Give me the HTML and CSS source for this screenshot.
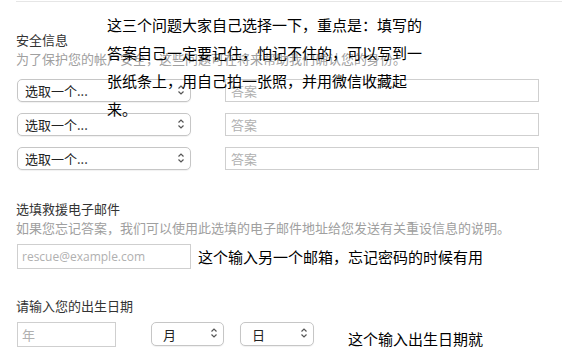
FILE: index.html
```html
<!DOCTYPE html>
<html lang="zh-CN">
<head>
    <meta charset="UTF-8">
    <meta name="viewport" content="width=device-width, initial-scale=1.0">
    <title>安全信息</title>
    <link rel="stylesheet" href="styles.css">
</head>
<body>
    <div class="page">
        <p class="note">这三个问题大家自己选择一下，重点是：填写的答案自己一定要记住，怕记不住的，可以写到一张纸条上，用自己拍一张照，并用微信收藏起来。</p>

        <div class="title">安全信息</div>
        <div class="hint">为了保护您的帐户安全，这些问题可在将来帮助我们确认您的身份。</div>
        <div class="questions">
            <div class="row">
                <span class="select-wrap wide">
                    <select><option>选取一个...</option></select>
                    <svg class="arrows" width="8" height="12" viewBox="0 0 8 12"><path d="M1.5 4.5 L4 2 L6.5 4.5 M1.5 7.5 L4 10 L6.5 7.5" fill="none" stroke="#555" stroke-width="1.2"/></svg>
                </span>
                <input class="answer" type="text" placeholder="答案">
            </div>
            <div class="row">
                <span class="select-wrap wide">
                    <select><option>选取一个...</option></select>
                    <svg class="arrows" width="8" height="12" viewBox="0 0 8 12"><path d="M1.5 4.5 L4 2 L6.5 4.5 M1.5 7.5 L4 10 L6.5 7.5" fill="none" stroke="#555" stroke-width="1.2"/></svg>
                </span>
                <input class="answer" type="text" placeholder="答案">
            </div>
            <div class="row">
                <span class="select-wrap wide">
                    <select><option>选取一个...</option></select>
                    <svg class="arrows" width="8" height="12" viewBox="0 0 8 12"><path d="M1.5 4.5 L4 2 L6.5 4.5 M1.5 7.5 L4 10 L6.5 7.5" fill="none" stroke="#555" stroke-width="1.2"/></svg>
                </span>
                <input class="answer" type="text" placeholder="答案">
            </div>
        </div>

        <div class="title section">选填救援电子邮件</div>
        <div class="hint">如果您忘记答案，我们可以使用此选填的电子邮件地址给您发送有关重设信息的说明。</div>
        <div class="email-row">
            <input class="email" type="email" placeholder="rescue@example.com">
            <span class="inline-note">这个输入另一个邮箱，忘记密码的时候有用</span>
        </div>

        <div class="title section-birth">请输入您的出生日期</div>
        <div class="birth-row">
            <input class="year" type="text" placeholder="年">
            <span class="select-wrap month">
                <select><option>月</option></select>
                <svg class="arrows" width="8" height="12" viewBox="0 0 8 12"><path d="M1.5 4.5 L4 2 L6.5 4.5 M1.5 7.5 L4 10 L6.5 7.5" fill="none" stroke="#555" stroke-width="1.2"/></svg>
            </span>
            <span class="select-wrap day">
                <select><option>日</option></select>
                <svg class="arrows" width="8" height="12" viewBox="0 0 8 12"><path d="M1.5 4.5 L4 2 L6.5 4.5 M1.5 7.5 L4 10 L6.5 7.5" fill="none" stroke="#555" stroke-width="1.2"/></svg>
            </span>
            <span class="inline-note birth-note">这个输入出生日期就</span>
        </div>
    </div>
</body>
</html>
```

FILE: styles.css
```css
body {
    margin: 0;
    background: #fff;
    font-family: "Noto Sans CJK SC", "Noto Sans", sans-serif;
    font-size: 13px;
    color: #333;
}
.page {
    position: relative;
    margin: 1px 0 0 16px;
    border-top: 1px solid #e6e6e6;
    padding-top: 29px;
}
.note {
    position: absolute;
    z-index: 2;
    left: 91px;
    top: 9px;
    width: 316px;
    margin: 0;
    font-size: 15px;
    line-height: 28px;
    color: #000;
}
.title {
    line-height: 18px;
    color: #333;
}
.hint {
    margin-top: 1px;
    line-height: 18px;
    color: #a0a0a0;
}
.section {
    margin-top: 30px;
}
.section-birth {
    margin-top: 28px;
}
.questions {
    margin-top: 11px;
    display: flex;
    flex-direction: column;
    gap: 11px;
}
.row {
    display: flex;
    gap: 34px;
    padding-left: 1px;
}
.select-wrap {
    position: relative;
    display: inline-block;
    height: 23px;
}
.select-wrap select {
    appearance: none;
    -webkit-appearance: none;
    width: 100%;
    height: 100%;
    margin: 0;
    padding: 0 0 0 7px;
    border: 1px solid #c6c6c6;
    border-radius: 5px;
    background: #fff;
    font-family: "Noto Sans CJK SC", sans-serif;
    font-size: 13px;
    color: #222;
    box-shadow: 0 1px 1px rgba(0, 0, 0, 0.06);
}
.arrows {
    position: absolute;
    right: 6px;
    top: 5px;
    pointer-events: none;
}
.wide {
    width: 174px;
}
input {
    margin: 0;
    border: 1px solid #cfcfcf;
    border-radius: 0;
    background: #fff;
    font-family: "Noto Sans CJK SC", sans-serif;
    font-size: 13px;
    color: #333;
    box-sizing: border-box;
}
input::placeholder {
    color: #b0b0b0;
}
.answer {
    width: 314px;
    height: 23px;
    padding: 0 5px;
}
.email-row {
    margin-top: 7px;
    display: flex;
    align-items: center;
    padding-left: 1px;
}
.email {
    width: 174px;
    height: 25px;
    padding: 0 4px;
    font-family: "Open Sans", sans-serif;
    font-size: 12px;
}
.inline-note {
    font-size: 15px;
    line-height: 20px;
    color: #000;
    margin-left: 7px;
}
.birth-row {
    margin-top: 7px;
    display: flex;
    align-items: flex-start;
    padding-left: 1px;
}
.year {
    width: 99px;
    height: 25px;
    padding: 0 4px;
}
.month {
    width: 73px;
    height: 24px;
    margin-left: 35px;
}
.day {
    width: 74px;
    height: 24px;
    margin-left: 16px;
}
.month select,
.day select {
    padding-left: 11px;
}
.birth-note {
    margin-left: 34px;
    margin-top: 7px;
}
```
